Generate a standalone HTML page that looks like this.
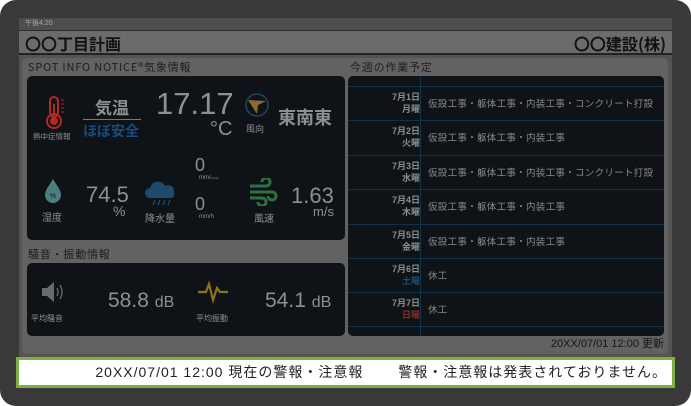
<!DOCTYPE html><html><head><meta charset="utf-8"><style>
*{margin:0;padding:0;box-sizing:border-box}
body{width:691px;height:406px;background:#fff;position:relative;overflow:hidden;font-family:"Liberation Sans","Noto Sans CJK JP",sans-serif}
.a{position:absolute}
.j{font-family:"Noto Sans CJK JP",sans-serif}
#frame{left:0;top:0;width:691px;height:406px;background:#393939;border-radius:16px}
#scr{left:19px;top:18px;width:653px;height:340px;background:#545454}
#bar{left:19px;top:18px;width:653px;height:13px;background:#4e4e4e;border-bottom:1px solid #2a2a2a;color:#aaa;font-size:7px;line-height:12px;padding-left:6px}
#hdr{left:19px;top:31px;width:653px;height:24px;background:#6b6b6b;border-bottom:2px solid #222;font-size:16px;font-weight:bold;color:#111;line-height:24px;padding:0 6px}
#sec{left:22px;top:58px;width:646px;height:296px;background:#626262;border-radius:5px}
.lbl{font-size:11px;color:#1e1e1e;letter-spacing:.8px;line-height:14px;font-family:"Noto Sans CJK JP",sans-serif}
.pn{background:#0f1318;border-radius:5px}
.t{color:#8f8f8f}
#sch .r{position:absolute;left:0;width:316px;border-top:1px solid #12324a}
#sch .d{position:absolute;left:0;width:72px;text-align:right;font-size:9px;line-height:12px;color:#8c8c8c;font-weight:bold}
#sch .w{position:absolute;left:80px;font-size:9.5px;letter-spacing:.3px;color:#888;font-family:"Noto Sans CJK JP",sans-serif;line-height:12px}
#alert{left:16px;top:357px;width:659px;height:31px;background:#fff;border:3px solid #7fae44;font-size:14px;letter-spacing:1px;color:#222;line-height:25px;text-align:right;padding-right:5px;font-family:"Liberation Sans","Noto Sans CJK JP",sans-serif;white-space:nowrap}
</style></head><body>
<div id="frame" class="a"></div>
<div id="scr" class="a"></div>
<div id="bar" class="a">午後4:20</div>
<div id="hdr" class="a j"><span>〇〇丁目計画</span><span style="float:right">〇〇建設(株)</span></div>
<div id="sec" class="a"></div>
<div class="a lbl" style="left:28px;top:60px">SPOT INFO NOTICE®気象情報</div>
<div class="a lbl" style="left:350px;top:60px">今週の作業予定</div>
<div class="a lbl" style="left:28px;top:247px">騒音・振動情報</div>
<div class="a pn" style="left:27px;top:76px;width:318px;height:164px"></div>
<svg class="a" style="left:44px;top:96px" width="22" height="34" viewBox="0 0 22 34"><rect x="6" y="1" width="8" height="20" rx="4" fill="none" stroke="#b02a25" stroke-width="2"/><circle cx="10" cy="25" r="7" fill="none" stroke="#b02a25" stroke-width="2"/><circle cx="10" cy="25" r="4" fill="#b02a25"/><rect x="9" y="8" width="2" height="16" fill="#b02a25"/><path d="M17 4h3M17 8h3M17 12h3M17 16h3" stroke="#b02a25"/></svg>
<div class="a t j" style="left:33px;top:131px;font-size:7.5px">熱中症情報</div>
<div class="a t j" style="left:83px;top:95px;width:58px;text-align:center;font-size:17px;font-weight:bold;border-bottom:1px solid #777;line-height:24px">気温</div>
<div class="a j" style="left:83px;top:122px;font-size:14px;font-weight:bold;color:#1b4a7c;line-height:18px">ほぼ安全</div>
<div class="a t" style="left:156px;top:86px;font-size:31px">17.17</div>
<div class="a t" style="left:210px;top:118px;font-size:20px">°C</div>
<svg class="a" style="left:245px;top:93px" width="24" height="24"><circle cx="12" cy="12" r="11" fill="none" stroke="#1f4d6e" stroke-width="1.3"/><path d="M3 7 L21 8 L13 12 L12 21 Z" fill="#8a6b2f"/></svg>
<div class="a t j" style="left:246px;top:122px;font-size:9px">風向</div>
<div class="a t j" style="left:278px;top:104px;font-size:18px;font-weight:bold">東南東</div>
<svg class="a" style="left:42px;top:178px" width="22" height="26"><path d="M11 1C7 8 3 12 3 17a8 8 0 0016 0c0-5-4-9-8-16z" fill="#4c7f7f"/><text x="11" y="20" font-size="7" text-anchor="middle" fill="#0f1318">%</text></svg>
<div class="a t j" style="left:42px;top:209px;font-size:10px">湿度</div>
<div class="a t" style="left:86px;top:182px;font-size:22px">74.5</div>
<div class="a t" style="left:113px;top:203px;font-size:14px">%</div>
<svg class="a" style="left:145px;top:178px" width="34" height="28"><path d="M5 20a5 5 0 010-10 8 8 0 0115-2 6 6 0 019 6 5 5 0 01-2 6z" fill="#1e4a70"/><path d="M10 22l-2 5M15 22l-2 5M20 22l-2 5M25 22l-2 5" stroke="#1e4a70" stroke-width="1.3"/></svg>
<div class="a t j" style="left:145px;top:210px;font-size:10px">降水量</div>
<div class="a t" style="left:195px;top:155px;font-size:18px">0</div>
<div class="a t" style="left:199px;top:175px;font-size:6px">mm/<span style="font-size:3px">10min</span></div>
<div class="a t" style="left:195px;top:194px;font-size:18px">0</div>
<div class="a t" style="left:199px;top:214px;font-size:6px">mm/h</div>
<svg class="a" style="left:248px;top:178px" width="30" height="28"><path d="M2 8h16a4 4 0 10-4-4M2 14h22a4 4 0 11-4 4M2 20h12a4 4 0 11-4 4" fill="none" stroke="#2e7041" stroke-width="3"/></svg>
<div class="a t j" style="left:254px;top:210px;font-size:10px">風速</div>
<div class="a t" style="left:291px;top:183px;font-size:22px">1.63</div>
<div class="a t" style="left:313px;top:204px;font-size:13px">m/s</div>
<div class="a pn" style="left:27px;top:263px;width:318px;height:73px"></div>
<svg class="a" style="left:40px;top:280px" width="24" height="24"><path d="M2 8h5l7-6v20l-7-6H2z" fill="#6a6a6a"/><path d="M17 8q2 4 0 8M20 5q4 7 0 14" stroke="#6a6a6a" fill="none" stroke-width="1.3"/></svg>
<div class="a t j" style="left:31px;top:313px;font-size:8px">平均騒音</div>
<div class="a t" style="left:108px;top:289px;font-size:21px">58.8 <span style="font-size:16px">dB</span></div>
<svg class="a" style="left:197px;top:280px" width="32" height="24"><path d="M1 12h8l3-8 4 16 4-12 3 4h8" fill="none" stroke="#8a7616" stroke-width="2.2"/></svg>
<div class="a t j" style="left:196px;top:313px;font-size:8px">平均振動</div>
<div class="a t" style="left:265px;top:289px;font-size:21px">54.1 <span style="font-size:16px">dB</span></div>
<div id="sch" class="a pn" style="left:348px;top:76px;width:316px;height:260px">
<div class="a" style="left:72px;top:0;width:1px;height:260px;background:#12324a"></div>
<div class="r" style="top:10px"></div>
<div class="r" style="top:44px"></div><div class="r" style="top:79px"></div><div class="r" style="top:113px"></div><div class="r" style="top:148px"></div><div class="r" style="top:182px"></div><div class="r" style="top:216px"></div><div class="r" style="top:250px"></div>
<div class="d" style="top:15px">7月1日<br>月曜</div><div class="w" style="top:21px">仮設工事・躯体工事・内装工事・コンクリート打設</div>
<div class="d" style="top:49px">7月2日<br>火曜</div><div class="w" style="top:55px">仮設工事・躯体工事・内装工事</div>
<div class="d" style="top:84px">7月3日<br>水曜</div><div class="w" style="top:90px">仮設工事・躯体工事・内装工事・コンクリート打設</div>
<div class="d" style="top:118px">7月4日<br>木曜</div><div class="w" style="top:124px">仮設工事・躯体工事・内装工事</div>
<div class="d" style="top:153px">7月5日<br>金曜</div><div class="w" style="top:159px">仮設工事・躯体工事・内装工事</div>
<div class="d" style="top:187px">7月6日<br><span style="color:#1d4e70">土曜</span></div><div class="w" style="top:193px">休工</div>
<div class="d" style="top:221px">7月7日<br><span style="color:#8a2a26">日曜</span></div><div class="w" style="top:227px">休工</div>
</div>
<div class="a" style="left:480px;top:337px;font-size:11px;color:#151515;width:184px;text-align:right;line-height:14px">20XX/07/01 12:00 更新</div>
<div id="alert" class="a">20XX/07/01 12:00 現在の警報・注意報　　 警報・注意報は発表されておりません。</div>
</body></html>
